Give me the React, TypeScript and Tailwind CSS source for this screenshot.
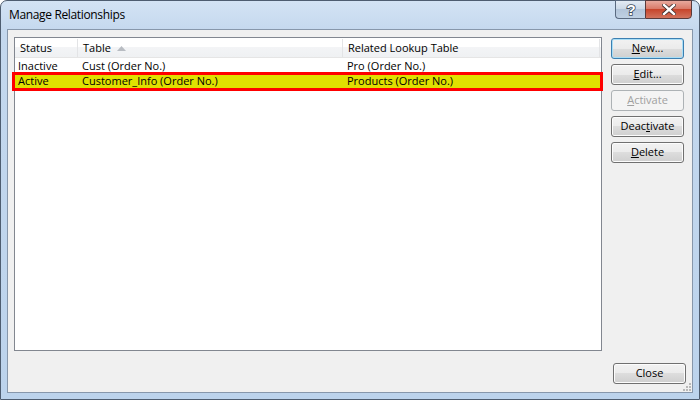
import React from "react";

const font = { fontFamily: '"Open Sans", "Noto Sans", sans-serif' };

function Btn({ children, def, disabled }: { children: React.ReactNode; def?: boolean; disabled?: boolean }) {
  if (disabled) {
    return (
      <div className="h-[21px] w-[73px] rounded-[3px] border border-[#adb2b5] bg-[#f4f4f4] flex items-center justify-center text-[11px] text-[#a0a0a0]">
        {children}
      </div>
    );
  }
  return (
    <div
      className={
        "h-[21px] w-[73px] rounded-[3px] border flex items-center justify-center text-[11px] text-black bg-[linear-gradient(to_bottom,#f2f2f2_0%,#ebebeb_50%,#dddddd_50%,#cfcfcf_100%)] " +
        (def ? "border-[#3c7fb1] shadow-[inset_0_0_0_1px_#a9def6]" : "border-[#707070] shadow-[inset_0_0_0_1px_#fcfcfc]")
      }
    >
      {children}
    </div>
  );
}

export default function App() {
  return (
    <div className="w-[700px] h-[400px] bg-white" style={font}>
      <div className="w-[700px] h-[400px] rounded-t-[7px] border border-[#4e5d70] bg-[linear-gradient(to_bottom,#d3e3f4_0%,#c4d8ee_30px,#bcd3ec_100%)] flex flex-col relative">
        {/* title bar */}
        <div className="h-[28px] flex items-start justify-between">
          <div className="pl-[8px] pt-[5px] text-[12px] tracking-[-0.35px] text-black leading-[18px]">Manage Relationships</div>
          <div className="flex mr-[7px] mt-[-1px]">
            <div className="w-[30px] h-[19px] rounded-bl-[4px] border border-[#5a6a80] border-r-0 bg-[linear-gradient(to_bottom,#e3ebf4_0%,#c9d7e6_50%,#b3c5da_50%,#bfd0e3_100%)] flex items-center justify-center">
              <svg width="14" height="16" viewBox="0 0 14 16">
                <text x="7" y="13" textAnchor="middle" fontSize="15" fontWeight="bold" fontFamily="Liberation Sans, sans-serif" fill="#ffffff" stroke="#3d4b5c" strokeWidth="1.6" paintOrder="stroke">?</text>
              </svg>
            </div>
            <div className="w-[47px] h-[19px] rounded-br-[4px] border border-[#5a3a3a] bg-[linear-gradient(to_bottom,#e8a99d_0%,#d87664_50%,#c7452c_50%,#d2735d_100%)] flex items-center justify-center">
              <svg width="14" height="11" viewBox="0 0 14 11">
                <path d="M2 1 L12 10 M12 1 L2 10" stroke="#3a2a2a" strokeWidth="4" strokeLinecap="square" />
                <path d="M2 1 L12 10 M12 1 L2 10" stroke="#ffffff" strokeWidth="2.4" strokeLinecap="square" />
              </svg>
            </div>
          </div>
        </div>
        {/* client */}
        <div className="mx-[6px] mb-[6px] flex-1 border border-[#8797ab] bg-[#f0f0f0] flex relative">
          <div className="pl-[6px] pt-[7px] pb-[40px]">
            <div className="w-[588px] h-[314px] border border-[#828790] bg-white relative">
              {/* header */}
              <div className="flex h-[20px] pt-[1px] border-b border-[#e5e5e5] bg-[linear-gradient(to_bottom,#ffffff_0%,#ffffff_50%,#f3f4f6_50%,#eff1f3_100%)] text-[11px] text-black">
                <div className="w-[63px] pl-[5px] flex items-center border-r border-[#e3e4e6]">Status</div>
                <div className="w-[265px] pl-[5px] flex items-center border-r border-[#e3e4e6]">
                  Table
                  <svg width="9" height="5" viewBox="0 0 9 5" className="ml-[6px]">
                    <path d="M0 5 L4.5 0 L9 5 Z" fill="#b8bcc2" />
                  </svg>
                </div>
                <div className="w-[257px] pl-[5px] flex items-center border-r border-[#e3e4e6]">Related Lookup Table</div>
              </div>
              <div className="flex h-[15px] pt-[2px] items-center text-[11px] text-black">
                <div className="w-[64px] pl-[3px]">Inactive</div>
                <div className="w-[265px] pl-[3px]">Cust (Order No.)</div>
                <div className="pl-[3px]">Pro (Order No.)</div>
              </div>
              <div className="flex h-[15px] pt-[1px] items-center text-[11px] text-black bg-[#e0e000]">
                <div className="w-[64px] pl-[3px]">Active</div>
                <div className="w-[265px] pl-[3px]">Customer_Info (Order No.)</div>
                <div className="pl-[3px]">Products (Order No.)</div>
              </div>
              {/* red annotation box */}
              <div className="absolute left-[-3px] top-[34px] w-[591px] h-[19px] border-[3px] border-[#ff0000]" />
            </div>
          </div>
          <div className="pl-[9px] pt-[8px] flex flex-col gap-[5px]">
            <Btn def>
              <span><u>N</u>ew...</span>
            </Btn>
            <Btn>
              <span><u>E</u>dit...</span>
            </Btn>
            <Btn disabled>
              <span><u>A</u>ctivate</span>
            </Btn>
            <Btn>
              <span>Deac<u>t</u>ivate</span>
            </Btn>
            <Btn>
              <span><u>D</u>elete</span>
            </Btn>
          </div>
          <div className="absolute right-[6px] bottom-[8px]">
            <Btn>Close</Btn>
          </div>
          <div className="absolute right-[1px] bottom-[1px] grid grid-cols-3 gap-[1px]">
            <span />
            <span />
            <span className="w-[2px] h-[2px] bg-[#b8b8b8]" />
            <span />
            <span className="w-[2px] h-[2px] bg-[#b8b8b8]" />
            <span className="w-[2px] h-[2px] bg-[#b8b8b8]" />
            <span className="w-[2px] h-[2px] bg-[#b8b8b8]" />
            <span className="w-[2px] h-[2px] bg-[#b8b8b8]" />
            <span className="w-[2px] h-[2px] bg-[#b8b8b8]" />
          </div>
        </div>
      </div>
    </div>
  );
}
